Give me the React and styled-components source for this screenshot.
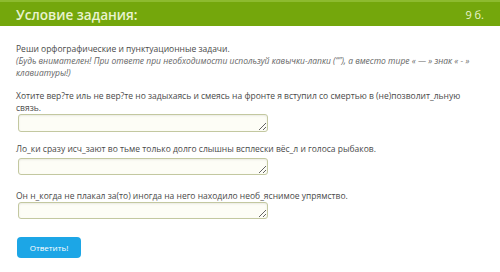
import React from "react";
import styled, { createGlobalStyle } from "styled-components";

const Global = createGlobalStyle`
  html, body { margin: 0; padding: 0; background: #fff; }
  body { font-family: "Open Sans", "Noto Sans", sans-serif; }
`;

const Page = styled.div`
  width: 500px;
  height: 272px;
  overflow: hidden;
  background: #fff;
`;

const Header = styled.div`
  height: 24px;
  border-top: 2px solid #8dbb2f;
  background: #74a70c;
  display: flex;
  align-items: center;
  justify-content: space-between;
  padding: 0 16px;
`;

const Title = styled.div`
  color: #e9f3cf;
  font-size: 13.6px;
  font-weight: 600;
`;

const Score = styled.div`
  color: #e9f3cf;
  font-size: 11px;
`;

const Body = styled.div`
  padding: 17px 16px 0 16px;
  color: #4a4a4a;
  font-size: 8.5px;
  line-height: 12px;
`;

const Intro = styled.p`
  margin: 0;
`;

const Note = styled.em`
  display: block;
  color: #666;
`;

const Question = styled.div`
  margin-top: ${(p) => p.$top}px;
`;

const Answer = styled.textarea`
  display: block;
  box-sizing: border-box;
  margin: ${(p) => p.$top}px 0 0 2px;
  width: 250px;
  height: ${(p) => p.$h}px;
  border: 1px solid #c3c8a0;
  border-radius: 3px;
  background: #fdfdf6;
  box-shadow: inset 0 1px 2px rgba(0, 0, 0, 0.08);
  resize: vertical;
  font-family: inherit;
  font-size: 9px;
  padding: 2px 4px;
`;

const Button = styled.button`
  margin: 18px 0 0 1px;
  width: 64px;
  height: 21px;
  border: none;
  border-radius: 4px;
  background: #1ca6e6;
  color: #fff;
  font-family: inherit;
  font-size: 8px;
  cursor: pointer;
`;

export default function App() {
  return (
    <Page>
      <Global />
      <Header>
        <Title>Условие задания:</Title>
        <Score>9 б.</Score>
      </Header>
      <Body>
        <Intro>
          Реши орфографические и пунктуационные задачи.
          <Note>
            (Будь внимателен! При ответе при необходимости используй кавычки-лапки (“”), а вместо тире « — » знак « - »
            клавиатуры!)
          </Note>
        </Intro>
        <Question $top={11}>
          Хотите вер?те иль не вер?те но задыхаясь и смеясь на фронте я вступил со смертью в (не)позволит_льную связь.
        </Question>
        <Answer $top={0} $h={18} />
        <Question $top={11}>
          Ло_ки сразу исч_зают во тьме только долго слышны всплески вёс_л и голоса рыбаков.
        </Question>
        <Answer $top={3} $h={17} />
        <Question $top={15}>
          Он н_когда не плакал за(то) иногда на него находило необ_яснимое упрямство.
        </Question>
        <Answer $top={0} $h={17} />
        <Button>Ответить!</Button>
      </Body>
    </Page>
  );
}
